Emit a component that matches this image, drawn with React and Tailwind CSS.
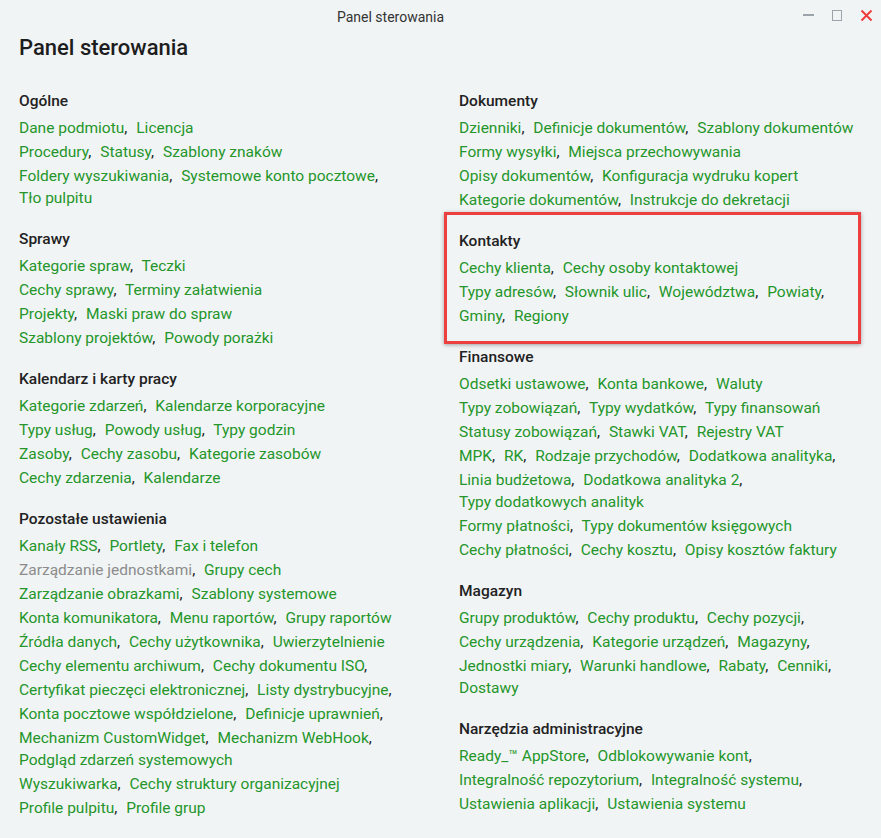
import React from 'react';

// a trailing "," on an item means the list goes on in the next row
const leftSections = [
  {
    title: 'Ogólne',
    groups: [
      ['Dane podmiotu', 'Licencja'],
      ['Procedury', 'Statusy', 'Szablony znaków'],
      ['Foldery wyszukiwania', 'Systemowe konto pocztowe', 'Tło pulpitu'],
    ],
  },
  {
    title: 'Sprawy',
    groups: [
      ['Kategorie spraw', 'Teczki'],
      ['Cechy sprawy', 'Terminy załatwienia'],
      ['Projekty', 'Maski praw do spraw'],
      ['Szablony projektów', 'Powody porażki'],
    ],
  },
  {
    title: 'Kalendarz i karty pracy',
    groups: [
      ['Kategorie zdarzeń', 'Kalendarze korporacyjne'],
      ['Typy usług', 'Powody usług', 'Typy godzin'],
      ['Zasoby', 'Cechy zasobu', 'Kategorie zasobów'],
      ['Cechy zdarzenia', 'Kalendarze'],
    ],
  },
  {
    title: 'Pozostałe ustawienia',
    groups: [
      ['Kanały RSS', 'Portlety', 'Fax i telefon'],
      ['~Zarządzanie jednostkami', 'Grupy cech'],
      ['Zarządzanie obrazkami', 'Szablony systemowe'],
      ['Konta komunikatora', 'Menu raportów', 'Grupy raportów'],
      ['Źródła danych', 'Cechy użytkownika', 'Uwierzytelnienie'],
      ['Cechy elementu archiwum', 'Cechy dokumentu ISO,'],
      ['Certyfikat pieczęci elektronicznej', 'Listy dystrybucyjne,'],
      ['Konta pocztowe współdzielone', 'Definicje uprawnień,'],
      ['Mechanizm CustomWidget', 'Mechanizm WebHook', 'Podgląd zdarzeń systemowych'],
      ['Wyszukiwarka', 'Cechy struktury organizacyjnej'],
      ['Profile pulpitu', 'Profile grup'],
    ],
  },
];

const rightSections = [
  {
    title: 'Dokumenty',
    groups: [
      ['Dzienniki', 'Definicje dokumentów', 'Szablony dokumentów'],
      ['Formy wysyłki', 'Miejsca przechowywania'],
      ['Opisy dokumentów', 'Konfiguracja wydruku kopert'],
      ['Kategorie dokumentów', 'Instrukcje do dekretacji'],
    ],
  },
  {
    title: 'Kontakty',
    highlight: true,
    groups: [
      ['Cechy klienta', 'Cechy osoby kontaktowej'],
      ['Typy adresów', 'Słownik ulic', 'Województwa', 'Powiaty,'],
      ['Gminy', 'Regiony'],
    ],
  },
  {
    title: 'Finansowe',
    groups: [
      ['Odsetki ustawowe', 'Konta bankowe', 'Waluty'],
      ['Typy zobowiązań', 'Typy wydatków', 'Typy finansowań'],
      ['Statusy zobowiązań', 'Stawki VAT', 'Rejestry VAT'],
      ['MPK', 'RK', 'Rodzaje przychodów', 'Dodatkowa analityka,'],
      ['Linia budżetowa', 'Dodatkowa analityka 2', 'Typy dodatkowych analityk'],
      ['Formy płatności', 'Typy dokumentów księgowych'],
      ['Cechy płatności', 'Cechy kosztu', 'Opisy kosztów faktury'],
    ],
  },
  {
    title: 'Magazyn',
    groups: [
      ['Grupy produktów', 'Cechy produktu', 'Cechy pozycji,'],
      ['Cechy urządzenia', 'Kategorie urządzeń', 'Magazyny,'],
      ['Jednostki miary', 'Warunki handlowe', 'Rabaty', 'Cenniki', 'Dostawy'],
    ],
  },
  {
    title: 'Narzędzia administracyjne',
    groups: [
      ['Ready_™ AppStore', 'Odblokowywanie kont,'],
      ['Integralność repozytorium', 'Integralność systemu,'],
      ['Ustawienia aplikacji', 'Ustawienia systemu'],
    ],
  },
];

// where a row wraps inside the window
const wraps = {
  'Systemowe konto pocztowe': true,
  'Mechanizm WebHook': true,
  'Dodatkowa analityka 2': true,
  'Cenniki': true,
};

const LinkGroup = ({ items }) => (
  <div className="mt-[2px] text-[15.5px] leading-[22px]">
    {items.map((raw, i) => {
      const disabled = raw.startsWith('~');
      let label = disabled ? raw.slice(1) : raw;
      const trailing = label.endsWith(',');
      if (trailing) label = label.slice(0, -1);
      const last = i === items.length - 1;
      return (
        <React.Fragment key={label}>
          <span className={disabled ? 'text-[#8c8c8c]' : 'text-[#24962a] cursor-pointer hover:underline'}>
            {label}
          </span>
          {(!last || trailing) && <span className="text-[#222] mr-[5px]">,</span>}
          {!last && (wraps[label] ? <br /> : ' ')}
        </React.Fragment>
      );
    })}
  </div>
);

const Section = ({ section }) => (
  <div className="relative mb-[19.5px]">
    {section.highlight && (
      <div className="absolute -left-[15px] right-[20px] -top-[18px] -bottom-[17px] border-[3px] border-[#ec4040] shadow-[0_1px_4px_rgba(0,0,0,0.35)] pointer-events-none" />
    )}
    <h3 className="text-[15.5px] leading-[22px] font-medium text-[#222] mb-[4.5px]">{section.title}</h3>
    {section.groups.map((g, i) => (
      <LinkGroup key={i} items={g} />
    ))}
  </div>
);

const App = () => {
  return (
    <div className="w-[881px] h-[838px] bg-[#f1f4f5] overflow-hidden" style={{ fontFamily: 'Roboto, "Noto Sans", sans-serif' }}>
      <div className="relative h-[34px] flex items-center justify-center pr-[100px]">
        <span className="text-[14px] text-[#333]">Panel sterowania</span>
        <div className="absolute right-0 top-0 h-[30px] flex items-center gap-[18px] pr-[8px]">
          <div className="w-[11px] h-[2px] bg-[#9aa4aa]" />
          <div className="w-[10px] h-[11px] border border-[#9aa4aa]" />
          <svg width="13" height="13" viewBox="0 0 13 13">
            <path d="M1.5 1.5 L11.5 11.5 M11.5 1.5 L1.5 11.5" stroke="#ef3b3b" strokeWidth="2" />
          </svg>
        </div>
      </div>
      <h1 className="px-[19px] text-[22px] leading-[28px] text-[#1d1d1d] font-medium mb-[28px]">Panel sterowania</h1>
      <div className="grid grid-cols-[440px_1fr] pl-[19px]">
        <div>
          {leftSections.map((s) => (
            <Section key={s.title} section={s} />
          ))}
        </div>
        <div>
          {rightSections.map((s) => (
            <Section key={s.title} section={s} />
          ))}
        </div>
      </div>
    </div>
  );
};

export default App;
